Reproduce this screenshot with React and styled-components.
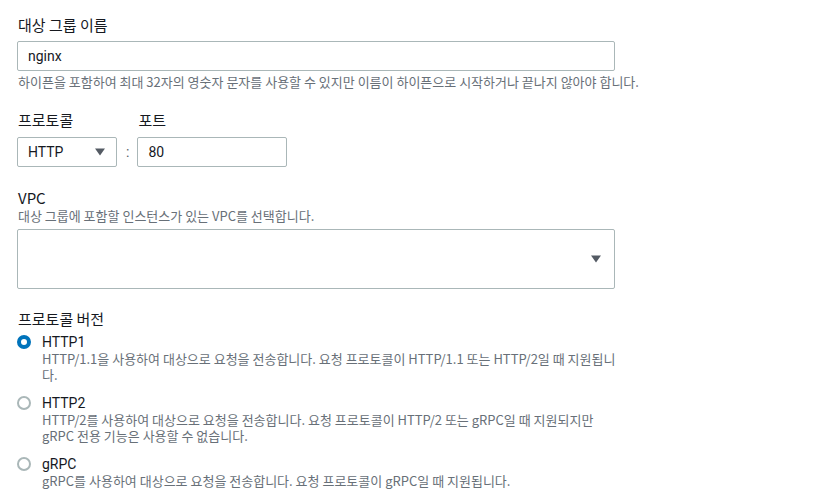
import React from "react";
import styled, { createGlobalStyle } from "styled-components";

const GlobalStyle = createGlobalStyle`
  html, body { margin: 0; padding: 0; background: #ffffff; }
  body {
    font-family: "Noto Sans CJK KR", sans-serif;
    color: #16191f;
  }
  * { box-sizing: border-box; }
`;

const Page = styled.div`
  padding: 15px 0 20px 17px;
  width: 833px;
  display: flex;
  flex-direction: column;
  gap: 20px;
`;

const Field = styled.div`
  display: flex;
  flex-direction: column;
  width: ${(p) => p.$width || "598px"};
`;

const Label = styled.div`
  font-family: "Noto Sans CJK KR", sans-serif;
  font-size: 15px;
  line-height: 20px;
  color: #16191f;
  padding-left: 1px;
  margin-bottom: ${(p) => p.$gap ?? 6}px;
`;

const Description = styled.div`
  font-family: "Noto Sans CJK KR", sans-serif;
  font-size: 13px;
  line-height: 16px;
  color: #687078;
  padding-left: 1px;
  margin-bottom: ${(p) => p.$gap ?? 0}px;
`;

const Hint = styled(Description)`
  margin-top: 3px;
  white-space: nowrap;
`;

const Input = styled.div`
  height: ${(p) => p.$height || 30}px;
  width: ${(p) => p.$width || "100%"};
  border: 1px solid #aab7b8;
  border-radius: 2px;
  background: #fff;
  padding: 0 10px;
  display: flex;
  align-items: center;
  font-family: Roboto, "Noto Sans CJK KR", sans-serif;
  font-size: 14px;
  color: #16191f;
`;

const Select = styled(Input)`
  justify-content: space-between;
  padding-right: ${(p) => p.$arrowPad || 11}px;
`;

const Caret = () => (
  <svg width="10" height="8" viewBox="0 0 10 8" aria-hidden="true">
    <path d="M0 0.5 H10 L5 7.5 Z" fill="#545b64" />
  </svg>
);

const Row = styled.div`
  display: flex;
  align-items: flex-end;
`;

const Colon = styled.div`
  height: 30px;
  line-height: 30px;
  font-family: Roboto, sans-serif;
  font-size: 14px;
  color: #545b64;
  margin: 0 8px 0 9px;
`;

const RadioGroup = styled.div`
  display: flex;
  flex-direction: column;
  gap: 11px;
`;

const RadioItem = styled.label`
  display: grid;
  grid-template-columns: 25px 1fr;
  width: 600px;
`;

const RadioCircle = styled.span`
  width: 14px;
  height: 14px;
  margin-top: 2px;
  border-radius: 50%;
  background: #fff;
  border: ${(p) => (p.$checked ? "4px solid #0073bb" : "2px solid #aab7b8")};
`;

const RadioText = styled.div`
  display: flex;
  flex-direction: column;
`;

const RadioLabel = styled.div`
  font-family: Roboto, "Noto Sans CJK KR", sans-serif;
  font-size: 14px;
  line-height: 18px;
  color: #16191f;
`;

const RadioDesc = styled.div`
  font-size: 13px;
  line-height: 16px;
  color: #687078;
`;

const options = [
  {
    id: "HTTP1",
    checked: true,
    desc: "HTTP/1.1을 사용하여 대상으로 요청을 전송합니다. 요청 프로토콜이 HTTP/1.1 또는 HTTP/2일 때 지원됩니다.",
  },
  {
    id: "HTTP2",
    checked: false,
    desc: "HTTP/2를 사용하여 대상으로 요청을 전송합니다. 요청 프로토콜이 HTTP/2 또는 gRPC일 때 지원되지만 gRPC 전용 기능은 사용할 수 없습니다.",
  },
  {
    id: "gRPC",
    checked: false,
    desc: "gRPC를 사용하여 대상으로 요청을 전송합니다. 요청 프로토콜이 gRPC일 때 지원됩니다.",
  },
];

export default function App() {
  return (
    <>
      <GlobalStyle />
      <Page>
        <Field>
          <Label>대상 그룹 이름</Label>
          <Input>nginx</Input>
          <Hint>
            하이픈을 포함하여 최대 32자의 영숫자 문자를 사용할 수 있지만 이름이 하이픈으로 시작하거나 끝나지 않아야 합니다.
          </Hint>
        </Field>

        <Row>
          <Field $width="100px">
            <Label $gap={7}>프로토콜</Label>
            <Select>
              <span>HTTP</span>
              <Caret />
            </Select>
          </Field>
          <Colon>:</Colon>
          <Field $width="150px">
            <Label $gap={7}>포트</Label>
            <Input>80</Input>
          </Field>
        </Row>

        <Field style={{ marginTop: 1 }}>
          <Label $gap={0}>VPC</Label>
          <Description $gap={5}>대상 그룹에 포함할 인스턴스가 있는 VPC를 선택합니다.</Description>
          <Select $height={60} $arrowPad={13}>
            <span />
            <Caret />
          </Select>
        </Field>

        <Field>
          <Label $gap={4}>프로토콜 버전</Label>
          <RadioGroup>
            {options.map((o) => (
              <RadioItem key={o.id}>
                <RadioCircle $checked={o.checked} />
                <RadioText>
                  <RadioLabel>{o.id}</RadioLabel>
                  <RadioDesc>{o.desc}</RadioDesc>
                </RadioText>
              </RadioItem>
            ))}
          </RadioGroup>
        </Field>
      </Page>
    </>
  );
}
